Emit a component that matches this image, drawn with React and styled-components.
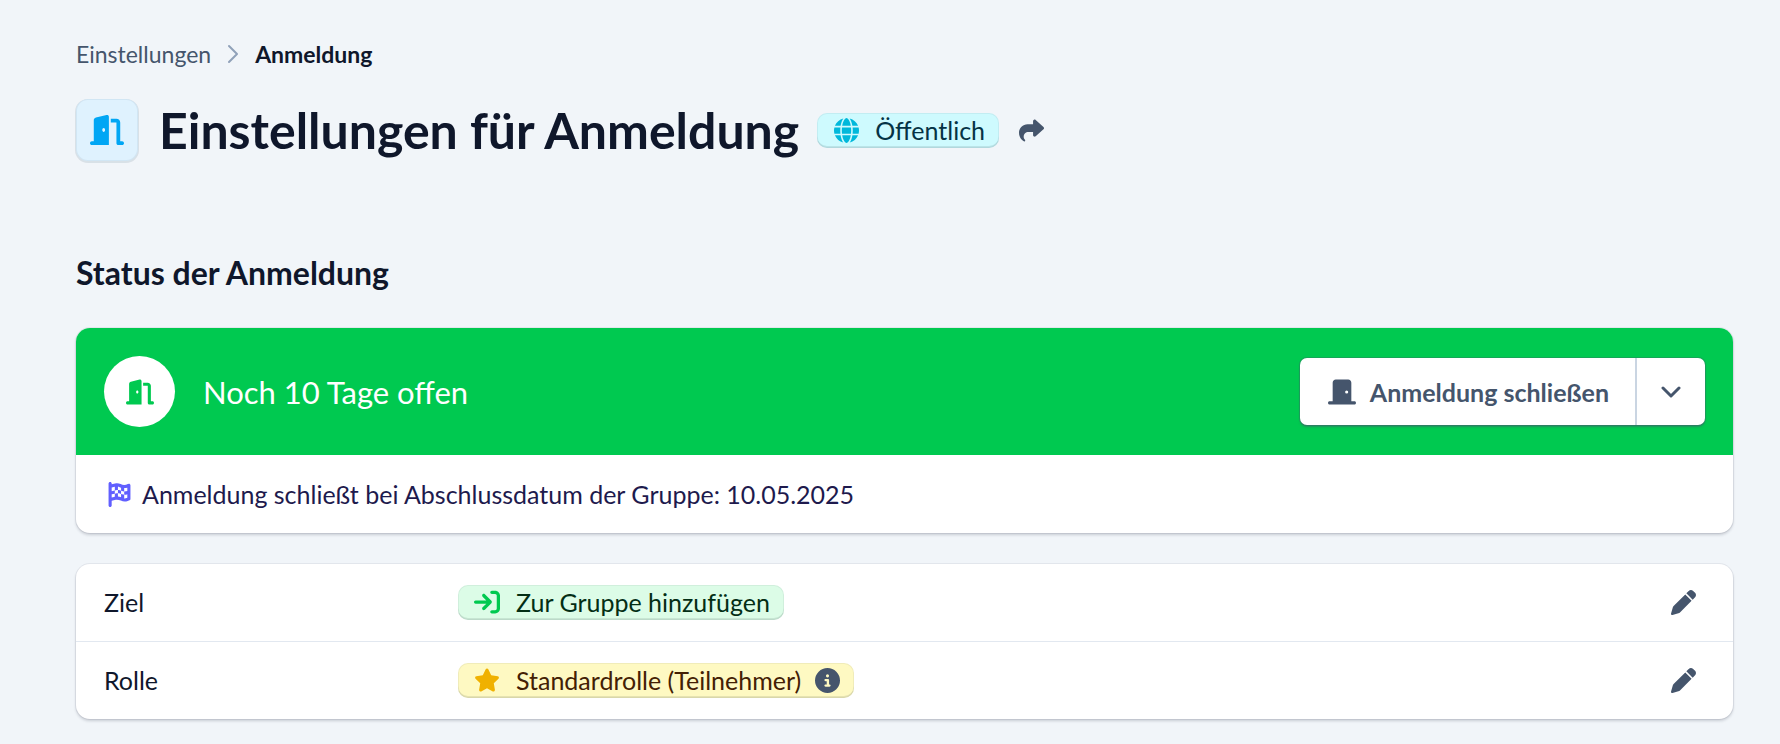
import React from "react";
import styled, { createGlobalStyle } from "styled-components";
import {
  FaArrowRightToBracket,
  FaCircleInfo,
  FaDoorClosed,
  FaDoorOpen,
  FaFlagCheckered,
  FaGlobe,
  FaPen,
  FaShare,
  FaStar,
} from "react-icons/fa6";

const colors = {
  page: "#f1f5f9",
  ink: "#0f172b",
  muted: "#45556c",
  faint: "#90a1b9",
  line: "#e2e8f0",
  divider: "#cad5e2",
  green: "#00c950",
};

const tones = {
  cyan: { bg: "#cefafe", fg: "#053345", icon: "#00b8db" },
  green: { bg: "#dcfce7", fg: "#032e15", icon: "#00c950" },
  yellow: { bg: "#fef9c2", fg: "#432004", icon: "#f0b100" },
};

const GlobalStyle = createGlobalStyle`
  *, *::before, *::after { box-sizing: border-box; }
  body {
    margin: 0;
    background: ${colors.page};
    color: ${colors.ink};
    font-family: Lato, "Liberation Sans", sans-serif;
    font-size: 25px;
    line-height: 36px;
  }
  h1, h2, p, ol, dl, dd { margin: 0; padding: 0; }
  button { font: inherit; border: 0; background: none; padding: 0; cursor: pointer; }
  svg { display: block; flex: none; }
`;

const Page = styled.main`
  padding: 36px 47px 20px 76px;
`;

const Breadcrumb = styled.ol`
  display: flex;
  align-items: center;
  gap: 14px;
  list-style: none;
`;

const Crumb = styled.li`
  display: flex;
  align-items: center;
  gap: 14px;
  font-size: 23px;
  font-weight: ${(p) => (p.$current ? 700 : 400)};
  color: ${(p) => (p.$current ? colors.ink : colors.muted)};
`;

const CrumbLink = styled.a`
  color: inherit;
  text-decoration: none;
`;

const CrumbArrow = styled.svg`
  color: ${colors.faint};
  width: 16px;
  height: 20px;
`;

const Header = styled.header`
  display: flex;
  align-items: center;
  gap: 18px;
  margin-top: 26px;
`;

const HeaderIcon = styled.span`
  display: flex;
  align-items: center;
  justify-content: center;
  flex: none;
  width: 62px;
  height: 62px;
  margin-right: 3px;
  border-radius: 12px;
  background: #dff2fe;
  color: #00a6f4;
  box-shadow: inset 0 0 0 1px rgba(2, 50, 80, 0.06), 0 1px 0 1px rgba(2, 50, 80, 0.1);
`;

const Title = styled.h1`
  font-size: 50px;
  line-height: 64px;
  font-weight: 700;
`;

const Badge = styled.span`
  display: inline-flex;
  align-items: center;
  gap: 14px;
  height: 35px;
  padding: 0 14px;
  border-radius: 10px;
  white-space: nowrap;
  background: ${(p) => tones[p.$tone].bg};
  color: ${(p) => tones[p.$tone].fg};
  box-shadow: inset 0 0 0 1px rgba(15, 40, 43, 0.06), inset 0 -2px 0 rgba(15, 40, 43, 0.1);
`;

const BadgeIcon = styled.span`
  display: flex;
  justify-content: center;
  width: 30px;
  color: ${(p) => tones[p.$tone].icon};
`;

const IconButton = styled.button`
  display: flex;
  align-items: center;
  justify-content: center;
  color: ${colors.muted};
  width: ${(p) => p.$width || 28}px;
  height: 36px;
`;

const SectionTitle = styled.h2`
  margin-top: 87px;
  font-size: 32px;
  line-height: 48px;
  font-weight: 700;
`;

const Card = styled.section`
  margin-top: ${(p) => p.$gap}px;
  border-radius: 14px;
  background: #fff;
  overflow: hidden;
  box-shadow: 0 0 0 1px rgba(15, 23, 43, 0.06), 0 2px 3px rgba(15, 23, 43, 0.18);
`;

const StatusBar = styled.div`
  display: flex;
  align-items: center;
  gap: 28px;
  padding: 28px;
  background: ${colors.green};
`;

const StatusIcon = styled.span`
  display: flex;
  align-items: center;
  justify-content: center;
  width: 71px;
  height: 71px;
  border-radius: 50%;
  background: #fff;
  color: ${colors.green};
`;

const StatusText = styled.p`
  flex: 1;
  font-size: 31px;
  line-height: 48px;
  color: #fff;
`;

const SplitButton = styled.div`
  display: flex;
  height: 67px;
  border-radius: 7px;
  background: #fff;
  box-shadow: 0 0 0 1px rgba(69, 85, 108, 0.3), 0 2px 2px rgba(69, 85, 108, 0.5);
`;

const SplitAction = styled.button`
  display: flex;
  align-items: center;
  gap: 14px;
  padding: 0 26px 0 28px;
  font-weight: 700;
  color: ${colors.muted};
  white-space: nowrap;
`;

const SplitToggle = styled.button`
  display: flex;
  align-items: center;
  justify-content: center;
  width: 70px;
  border-left: 2px solid ${colors.divider};
  color: ${colors.muted};
`;

const Note = styled.p`
  display: flex;
  align-items: center;
  gap: 8px;
  padding: 21px 28px;
  color: #1e1a4d;
`;

const NoteIcon = styled.span`
  display: flex;
  justify-content: center;
  width: 30px;
  color: #615fff;
`;

const Row = styled.div`
  display: grid;
  grid-template-columns: 326px 1fr auto;
  align-items: center;
  column-gap: 28px;
  padding: 20px 28px 21px;

  & + & {
    border-top: 1px solid ${colors.line};
  }
`;

const RowValue = styled.dd`
  display: flex;
`;

function SettingRow({ label, tone, icon, text, info }) {
  return (
    <Row>
      <dt>{label}</dt>
      <RowValue>
        <Badge $tone={tone}>
          <BadgeIcon $tone={tone}>{icon}</BadgeIcon>
          {text}
          {info && <FaCircleInfo size={25} color={colors.muted} />}
        </Badge>
      </RowValue>
      <dd>
        <IconButton type="button" aria-label={`${label} bearbeiten`} $width={44}>
          <FaPen size={25} />
        </IconButton>
      </dd>
    </Row>
  );
}

export default function App() {
  return (
    <>
      <GlobalStyle />
      <Page>
        <nav>
          <Breadcrumb>
            <Crumb>
              <CrumbLink href="#einstellungen">Einstellungen</CrumbLink>
              <CrumbArrow viewBox="0 0 16 20" fill="none" stroke="currentColor" strokeWidth="2" strokeLinecap="round" strokeLinejoin="round">
                <path d="M4 2l8 8-8 8" />
              </CrumbArrow>
            </Crumb>
            <Crumb $current aria-current="page">Anmeldung</Crumb>
          </Breadcrumb>
        </nav>

        <Header>
          <HeaderIcon>
            <FaDoorOpen size={34} />
          </HeaderIcon>
          <Title>Einstellungen für Anmeldung</Title>
          <Badge $tone="cyan">
            <BadgeIcon $tone="cyan"><FaGlobe size={25} /></BadgeIcon>
            Öffentlich
          </Badge>
          <IconButton type="button" aria-label="Teilen">
            <FaShare size={25} />
          </IconButton>
        </Header>

        <SectionTitle>Status der Anmeldung</SectionTitle>

        <Card $gap={31}>
          <StatusBar>
            <StatusIcon><FaDoorOpen size={28} /></StatusIcon>
            <StatusText>Noch 10 Tage offen</StatusText>
            <SplitButton>
              <SplitAction type="button">
                <FaDoorClosed size={28} />
                Anmeldung schließen
              </SplitAction>
              <SplitToggle type="button" aria-label="Weitere Optionen">
                <svg width="20" height="12" viewBox="0 0 20 12" fill="none" stroke="currentColor" strokeWidth="3" strokeLinecap="round" strokeLinejoin="round">
                  <path d="M2 2l8 8 8-8" />
                </svg>
              </SplitToggle>
            </SplitButton>
          </StatusBar>
          <Note>
            <NoteIcon><FaFlagCheckered size={25} /></NoteIcon>
            Anmeldung schließt bei Abschlussdatum der Gruppe: 10.05.2025
          </Note>
        </Card>

        <Card as="dl" $gap={31}>
          <SettingRow label="Ziel" tone="green" icon={<FaArrowRightToBracket size={26} />} text="Zur Gruppe hinzufügen" />
          <SettingRow label="Rolle" tone="yellow" icon={<FaStar size={26} />} text="Standardrolle (Teilnehmer)" info />
        </Card>
      </Page>
    </>
  );
}
